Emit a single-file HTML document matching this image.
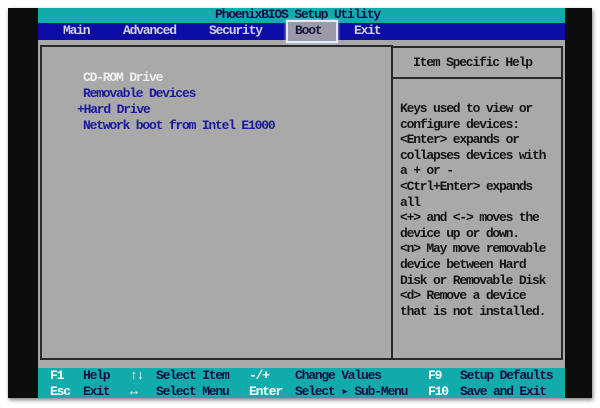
<!DOCTYPE html>
<html><head><meta charset="utf-8"><style>
*{margin:0;padding:0;box-sizing:border-box}
body{width:600px;height:408px;background:#fff;position:relative;overflow:hidden;font-family:"Liberation Mono","DejaVu Sans Mono",monospace;font-size:13px;letter-spacing:-1.2px;font-weight:bold}
#blk{position:absolute;left:8px;top:8px;width:584px;height:390px;background:#0c0c0c;box-shadow:1px 2px 4px rgba(0,0,0,.5)}
#scr{position:absolute;left:38px;top:8px;width:527px;height:390px;background:#a9a9a9}
.t{position:absolute;white-space:pre;line-height:15.6px}
#title{position:absolute;left:38px;top:8px;width:527px;height:15px;background:#12abab}
#menu{position:absolute;left:38px;top:23px;width:527px;height:17px;background:#0d0ca6}
#foot{position:absolute;left:38px;top:368px;width:527px;height:30px;background:#12abab}
.box{position:absolute;border:2px solid #2a2a2a}
</style></head><body>
<div id="blk"></div>
<div id="scr"></div>
<div id="title"></div>
<div id="menu"></div>
<div class="t" style="left:215px;top:7px;color:#101040">PhoenixBIOS Setup Utility</div>
<div class="t" style="left:63px;top:23px;color:#d0d0e0">Main</div>
<div class="t" style="left:123px;top:23px;color:#d0d0e0">Advanced</div>
<div class="t" style="left:209px;top:23px;color:#d0d0e0">Security</div>
<div style="position:absolute;left:286px;top:20px;width:52px;height:23px;border:2px solid #e8e8ff;background:#9a9aa8;box-shadow:0 0 3px #ccf"></div>
<div class="t" style="left:295px;top:23px;color:#1a1a40">Boot</div>
<div class="t" style="left:354px;top:23px;color:#d0d0e0">Exit</div>
<div class="box" style="left:40px;top:45px;width:353px;height:315px"></div>
<div class="box" style="left:391px;top:46px;width:172px;height:314px"></div>
<div style="position:absolute;left:391px;top:77px;width:172px;height:2px;background:#2a2a2a"></div>
<div class="t" style="left:413px;top:55px;color:#151515">Item Specific Help</div>
<div class="t" style="left:83px;top:70px;color:#f0f0f0">CD-ROM Drive</div>
<div class="t" style="left:83px;top:86px;color:#1a1a9a">Removable Devices</div>
<div class="t" style="left:77px;top:102px;color:#1a1a9a">+Hard Drive</div>
<div class="t" style="left:83px;top:118px;color:#1a1a9a">Network boot from Intel E1000</div>
<div class="t" style="left:400px;top:101px;color:#151515">Keys used to view or
configure devices:
&lt;Enter&gt; expands or
collapses devices with
a + or -
&lt;Ctrl+Enter&gt; expands
all
&lt;+&gt; and &lt;-&gt; moves the
device up or down.
&lt;n&gt; May move removable
device between Hard
Disk or Removable Disk
&lt;d&gt; Remove a device
that is not installed.</div>
<div id="foot"></div>
<div class="t" style="left:50px;top:368px;color:#fff">F1
Esc</div>
<div class="t" style="left:83px;top:368px;color:#101040">Help
Exit</div>
<div class="t" style="left:130px;top:368px;color:#fff">↑↓
↔</div>
<div class="t" style="left:156px;top:368px;color:#101040">Select Item
Select Menu</div>
<div class="t" style="left:249px;top:368px;color:#fff">-/+
Enter</div>
<div class="t" style="left:295px;top:368px;color:#101040">Change Values
Select ▸ Sub-Menu</div>
<div class="t" style="left:428px;top:368px;color:#fff">F9
F10</div>
<div class="t" style="left:460px;top:368px;color:#101040">Setup Defaults
Save and Exit</div>
</body></html>
